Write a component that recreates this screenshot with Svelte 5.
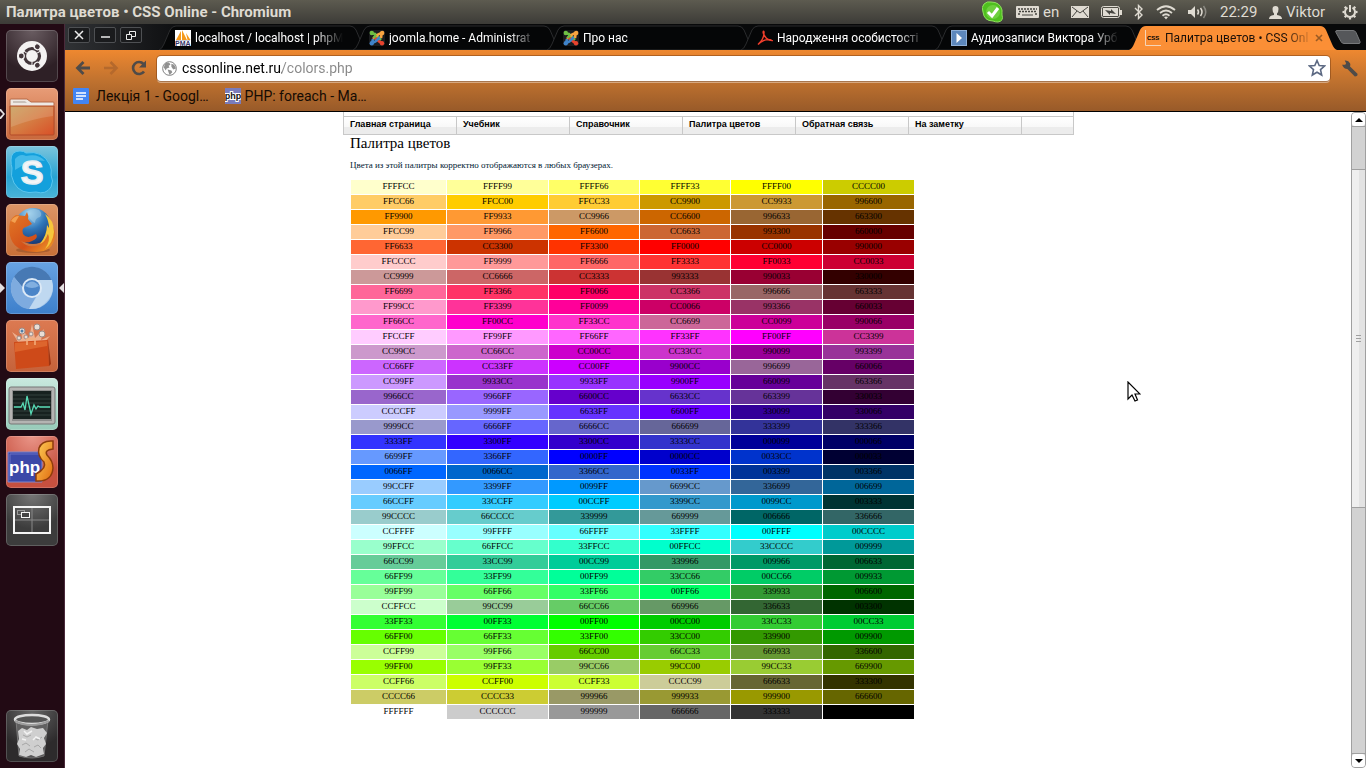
<script>
  const tabs = [
    { icon: 'pma', title: 'localhost / localhost | phpM' },
    { icon: 'joomla', title: 'joomla.home - Administrat' },
    { icon: 'joomla', title: 'Про нас' },
    { icon: 'pdf', title: 'Народження особистості' },
    { icon: 'play', title: 'Аудиозаписи Виктора Урб' },
    { icon: 'css', title: 'Палитра цветов • CSS Onl', active: true }
  ];

  const menu = ['Главная страница', 'Учебник', 'Справочник', 'Палитра цветов', 'Обратная связь', 'На заметку'];

  const rows = `
FFFFCC FFFF99 FFFF66 FFFF33 FFFF00 CCCC00
FFCC66 FFCC00 FFCC33 CC9900 CC9933 996600
FF9900 FF9933 CC9966 CC6600 996633 663300
FFCC99 FF9966 FF6600 CC6633 993300 660000
FF6633 CC3300 FF3300 FF0000 CC0000 990000
FFCCCC FF9999 FF6666 FF3333 FF0033 CC0033
CC9999 CC6666 CC3333 993333 990033 330000
FF6699 FF3366 FF0066 CC3366 996666 663333
FF99CC FF3399 FF0099 CC0066 993366 660033
FF66CC FF00CC FF33CC CC6699 CC0099 990066
FFCCFF FF99FF FF66FF FF33FF FF00FF CC3399
CC99CC CC66CC CC00CC CC33CC 990099 993399
CC66FF CC33FF CC00FF 9900CC 996699 660066
CC99FF 9933CC 9933FF 9900FF 660099 663366
9966CC 9966FF 6600CC 6633CC 663399 330033
CCCCFF 9999FF 6633FF 6600FF 330099 330066
9999CC 6666FF 6666CC 666699 333399 333366
3333FF 3300FF 3300CC 3333CC 000099 000066
6699FF 3366FF 0000FF 0000CC 0033CC 000033
0066FF 0066CC 3366CC 0033FF 003399 003366
99CCFF 3399FF 0099FF 6699CC 336699 006699
66CCFF 33CCFF 00CCFF 3399CC 0099CC 003333
99CCCC 66CCCC 339999 669999 006666 336666
CCFFFF 99FFFF 66FFFF 33FFFF 00FFFF 00CCCC
99FFCC 66FFCC 33FFCC 00FFCC 33CCCC 009999
66CC99 33CC99 00CC99 339966 009966 006633
66FF99 33FF99 00FF99 33CC66 00CC66 009933
99FF99 66FF66 33FF66 00FF66 339933 006600
CCFFCC 99CC99 66CC66 669966 336633 003300
33FF33 00FF33 00FF00 00CC00 33CC33 00CC33
66FF00 66FF33 33FF00 33CC00 339900 009900
CCFF99 99FF66 66CC00 66CC33 669933 336600
99FF00 99FF33 99CC66 99CC00 99CC33 669900
CCFF66 CCFF00 CCFF33 CCCC99 666633 333300
CCCC66 CCCC33 999966 999933 999900 666600
FFFFFF CCCCCC 999999 666666 333333 000000`
    .trim()
    .split('\n')
    .map((line) => line.split(' '));

  const hatches = [0, 120, 240];
  const teeth = [45, 90, 135, 180, 225, 270, 315];
</script>

{#snippet favicon(kind)}
  <svg class="favicon" viewBox="0 0 16 16" aria-hidden="true">
    {#if kind === 'pma'}
      <rect width="16" height="16" fill="#fff" />
      <path d="M1 10 6 1v9zM7 10V0l5 10zM12.500 10 11 3l4.500 7z" fill="#f59a1b" />
      <path d="M1 10.500h14" stroke="#c9c9d6" />
      <text x="0" y="16" font-family="Liberation Sans" font-weight="bold" font-size="7" fill="#333366">PMA</text>
    {:else if kind === 'joomla'}
      <rect width="16" height="16" rx="3" fill="#1b1c1e" />
      <g fill="none" stroke-width="2.600">
        <path d="M3 3.500 6 4l6 6" stroke="#6fbf44" />
        <path d="M12.500 3 9 4.500 4 9" stroke="#f9a541" />
        <path d="M13 13 10 11.500 5 7" stroke="#e8432e" />
        <path d="M3 13l1-4M3 13l3.500-1.500L11 7" stroke="#3f83c9" />
        <path d="m4.500 8 2.500-3" stroke="#6fbf44" />
        <path d="m12.500 4-.5 4" stroke="#f9a541" />
      </g>
      <circle cx="2.800" cy="3" r="2.200" fill="#6fbf44" />
      <circle cx="13.200" cy="3" r="2.200" fill="#f9a541" />
      <circle cx="13" cy="13.200" r="2.200" fill="#e8432e" />
      <circle cx="2.800" cy="13.200" r="2.200" fill="#3f83c9" />
    {:else if kind === 'pdf'}
      <path d="M1 14.500C4 12 7 7 7 2.500 7 .8 6 1 6.200 2.500 7 7 11 10.500 15 10.500 12 8.500 6 9.500 1 14.500z" fill="none" stroke="#ef3e2c" stroke-width="1.500" />
    {:else if kind === 'play'}
      <rect x=".5" y=".5" width="15" height="15" fill="#5d88bd" stroke="#8fb0d8" />
      <path d="M5.500 3v10l5.500-5z" fill="#fff" />
    {:else}
      <path d="M.5 0v15.500H16" fill="none" stroke="#f5d4b8" />
      <text x="2" y="10" font-family="Liberation Sans" font-weight="bold" font-size="6" fill="#000">CSS</text>
    {/if}
  </svg>
{/snippet}

<svelte:head><title>Палитра цветов • CSS Online</title></svelte:head>

<div class="desktop">
  <header class="panel">
    <span class="window-title">Палитра цветов • CSS Online - Chromium</span>
    <div class="tray">
      <svg width="22" height="22" viewBox="0 0 22 22">
        <path d="M2 3Q5 0 9 1q9 0 11 8 0 3 0 5 2 6-4 7-3 0-5-1-9 0-10-9Q-1 6 2 3z" fill="#4fc01f" stroke="#8fe05e" />
        <circle cx="11" cy="11" r="7" fill="#6ed03f" />
        <path d="m6 11 4 4 6-8" fill="none" stroke="#fff" stroke-width="3" />
      </svg>
      <span class="pair">
        <svg width="23" height="12" viewBox="0 0 23 12">
          <rect width="23" height="12" rx="1" fill="#dfdbd2" />
          <path d="M2 3h19M3 5.500h17M2 8h2M19 8h2" stroke="#45443f" stroke-width="1.500" stroke-dasharray="2 1" />
          <path d="M6 9h11" stroke="#45443f" />
        </svg>
        <span class="lang">en</span>
      </span>
      <svg width="18" height="12" viewBox="0 0 18 12">
        <rect width="18" height="12" fill="#dfdbd2" />
        <path d="m1 1 8 6 8-6M1 11l5-6M17 11l-5-6" fill="none" stroke="#45443f" />
      </svg>
      <svg width="21" height="12" viewBox="0 0 21 12">
        <rect x=".5" y=".5" width="18" height="11" rx="2" fill="none" stroke="#dfdbd2" />
        <rect x="2" y="2" width="15" height="8" fill="#dfdbd2" />
        <path d="M19 4h2v5h-2" fill="#dfdbd2" />
        <path d="m4 4 6 1V3l5 5-6-1v2z" fill="#45443f" />
      </svg>
      <svg width="10" height="16" viewBox="0 0 10 16">
        <path d="m1 4 7 7-3.500 3.500v-13L8 5l-7 7" fill="none" stroke="#dfdbd2" stroke-width="1.400" />
      </svg>
      <svg width="20" height="15" viewBox="0 0 20 15" fill="none" stroke="#dfdbd2" stroke-width="1.800">
        <path d="M1 5q9-7.500 18 0M4 8q6-5 12 0M6.500 10.800q3.500-3 7 0" />
        <path d="m8 12 2 2.500 2-2.500q-2-1-4 0z" fill="#dfdbd2" stroke="none" />
      </svg>
      <svg width="20" height="14" viewBox="0 0 20 14">
        <path d="M0 5h3l4-4v12L3 9H0z" fill="#dfdbd2" />
        <path d="M9.500 4.500q2 2.500 0 5M12.500 3q3 4 0 8" fill="none" stroke="#dfdbd2" stroke-width="1.500" />
        <path d="M15.500 1q4.500 6 0 12" fill="none" stroke="#8b8982" stroke-width="1.500" />
      </svg>
      <span class="clock">22:29</span>
      <span class="pair user">
        <svg width="13" height="13" viewBox="0 0 13 13">
          <path d="M3.500 3a3 3 0 0 1 6 0q0 3-1.500 4.500v1.500q5 .5 5 4H0q0-3.500 5-4V7.500Q3.500 6 3.500 3z" fill="#dfdbd2" />
        </svg>
        <span class="name">Viktor</span>
      </span>
      <svg width="16" height="16" viewBox="0 0 16 16" fill="none" stroke="#dfdbd2">
        <path d="M5.500 3.700a5 5 0 1 0 5 0" stroke-width="2" />
        <path d="M8 1v7" stroke-width="2" />
        {#each teeth as a}
          <path d="M8 2.500V.5" stroke-width="2.200" transform={`rotate(${a} 8 8)`} />
        {/each}
      </svg>
    </div>
  </header>

  <nav class="launcher" aria-label="Launcher">
    <button class="tile dash" aria-label="Dash">
      <svg viewBox="0 0 52 52">
        <circle cx="26" cy="26" r="15" fill="#f4f2f2" />
        <circle cx="26" cy="26" r="7.500" fill="none" stroke="#43363b" stroke-width="3.200" />
        {#each hatches as a}
          <g transform={`rotate(${a} 26 26)`}>
            <circle cx="15.300" cy="26" r="3" fill="#43363b" stroke="#f4f2f2" stroke-width="1.200" />
            <path d="m29 20.800 3-5" stroke="#f4f2f2" stroke-width="1" transform="rotate(30 26 26)" />
          </g>
        {/each}
      </svg>
    </button>

    <button class="tile files running" aria-label="Files">
      <svg viewBox="0 0 52 52">
        <defs>
          <linearGradient id="folder" x2="1" y2="1">
            <stop stop-color="#c69d58" /><stop offset=".5" stop-color="#d57b42" /><stop offset="1" stop-color="#d94f27" />
          </linearGradient>
        </defs>
        <path d="M4 46V12q0-1 1-1h16l4 3h22q1 0 1 1v31z" fill="#eee9e4" stroke="#b66a48" />
        <path d="M7 13h12l2 2H7z" fill="#c9c1ba" />
        <path d="M4 18h44v28q0 1-1 1H5q-1 0-1-1z" fill="url(#folder)" stroke="#b24b29" />
        <path d="M5 19h42v9Q25 31 5 39z" fill="#fff" opacity=".14" />
      </svg>
    </button>

    <button class="tile skype" aria-label="Skype">
      <svg viewBox="0 0 52 52">
        <path d="M5 14Q5 5 14 5q4 0 6 2 17-3 24 12 2 5 1 10 3 6 0 12-5 8-15 5-15 3-22-9-4-7-2-15-1-3-1-8z" fill="#13a0dc" stroke="#5cc6ee" />
        <path d="M9 13q5-6 11-3 12-3 19 5-12-3-30 9z" fill="#64cbf1" opacity=".6" />
        <text x="26" y="38" text-anchor="middle" font-family="Liberation Sans" font-size="34" font-weight="bold" fill="#f4f6f7" stroke="#e6eef2" stroke-width="1.500">S</text>
      </svg>
    </button>

    <button class="tile firefox" aria-label="Firefox">
      <svg viewBox="0 0 52 52">
        <defs>
          <radialGradient id="globe" cx=".4" cy=".15" r=".9">
            <stop stop-color="#9fd4f0" /><stop offset=".5" stop-color="#2f76b9" /><stop offset="1" stop-color="#15336f" />
          </radialGradient>
          <linearGradient id="fox" x2="1" y2="1">
            <stop stop-color="#e37a26" /><stop offset=".6" stop-color="#d2501a" /><stop offset="1" stop-color="#f4a42a" />
          </linearGradient>
        </defs>
        <ellipse cx="27" cy="46" rx="17" ry="3" fill="#8a4a24" opacity=".5" />
        <circle cx="27" cy="22" r="18" fill="url(#globe)" />
        <path d="M20 8q6-5 13-2 4 4 1 7-5 1-5 6-5-2-9-11z" fill="#a7cfe8" opacity=".5" />
        <path d="M4 18q2-5 6-7l9 1 2-4q2 4 1 7l4 5-6 3q-5 1-3 7 4 6 13 0 3 4-4 7-6 3-11 0 7 8 18 4 9-5 10-17l3 6-1-11q6 9 3 18-4 11-17 11Q10 48 5 35q-3-8-1-17z" fill="url(#fox)" />
        <path d="M39 10q9 6 9 18-1 11-9 17 6-9 3-15-3 8-8 10 7-9 7-19l2 3q0-7-4-14z" fill="#f6c63b" />
        <path d="M5 17q3-5 8-5l-4 7z" fill="#f3a050" />
      </svg>
    </button>

    <button class="tile chromium running focused" aria-label="Chromium">
      <svg viewBox="0 0 52 52">
        <circle cx="26" cy="26" r="21" fill="#a4c5e9" />
        <path d="M8 15a21 21 0 0 1 36 0l2 4H26q-6 0-8 8z" fill="#4779b4" />
        <path d="M8 15q-7 12 1 24 5 7 14 8l8-14q-10 3-13-6z" fill="#7eabdf" />
        <path d="M46 18q3 12-4 20-8 10-19 9l10-16q3-6-2-13z" fill="#bfd8f0" />
        <circle cx="26" cy="26" r="10" fill="#dce9f6" />
        <circle cx="26" cy="26" r="8" fill="#4b85c8" />
        <path d="M19 24q7-9 14 0-7 4-14 0z" fill="#81afe0" />
      </svg>
    </button>

    <button class="tile software" aria-label="Software Center">
      <svg viewBox="0 0 52 52">
        <path d="M12 22 6 12l10 7-1-11 8 10 3-14 3 14 9-9-3 11 9-4-7 8z" fill="#ffd9bd" opacity=".6" />
        <g fill="#e9ddd5" stroke="#9b8c88">
          <circle cx="16" cy="11" r="3" /><circle cx="31" cy="7" r="3" /><circle cx="25" cy="14" r="2" />
          <circle cx="36" cy="14" r="3" /><circle cx="20" cy="17" r="2" /><circle cx="13" cy="18" r="2" />
        </g>
        <circle cx="16" cy="11" r="1.500" fill="#4e7fa8" />
        <path d="m8 22 34-2 1 26-33 3z" fill="#ce4a19" />
        <path d="m9 23 32-2v5L9 32z" fill="#e16b32" opacity=".8" />
        <path d="m42 20 3 24-2 2z" fill="#9f3411" />
        <path d="M21 25v-6h8v6" fill="none" stroke="#f4b07e" stroke-width="1.500" />
      </svg>
    </button>

    <button class="tile monitor" aria-label="System Monitor">
      <svg viewBox="0 0 52 52">
        <rect x="3" y="9" width="46" height="37" rx="2" fill="#b4b4b2" stroke="#777" />
        <rect x="6" y="12" width="40" height="31" fill="#8d8e8d" />
        <rect x="7" y="13" width="38" height="28" fill="#17211f" />
        <path d="M7 17h38M7 21h38M7 25h38M7 29h38M7 33h38M7 37h38" stroke="#33413d" />
        <path d="M8 29h7l2-4 2 7 2-14 4 18 3-9 2 4 2-3 2 1h10" fill="none" stroke="#57d9b4" stroke-width="1.300" />
      </svg>
    </button>

    <button class="tile phpstorm" aria-label="PHP editor">
      <svg viewBox="0 0 52 52">
        <defs>
          <linearGradient id="storm" x2="1" y2="1"><stop stop-color="#ffd058" /><stop offset="1" stop-color="#e06b10" /></linearGradient>
        </defs>
        <path d="M2 16h34v30H2z" fill="#3b48a8" stroke="#8187cb" />
        <path d="M4 18h30M4 18v26" stroke="#6871c6" fill="none" />
        <text x="3" y="37" font-family="Liberation Sans Narrow, Liberation Sans" font-size="17" font-weight="bold" fill="#fff">php</text>
        <path d="M47 5q-11-1-14 7-2 8 5 14 3 6-8 12v7q16 1 17-13 0-7-6-13-3-5 6-6z" fill="url(#storm)" stroke="#8e3d0c" stroke-width="1.500" />
      </svg>
    </button>

    <button class="tile workspace" aria-label="Workspace Switcher">
      <svg viewBox="0 0 52 52" fill="none">
        <path d="M26 13v26M8 26h36" stroke="#888" />
        <rect x="8" y="13" width="36" height="26" stroke="#f5f5f5" stroke-width="2" />
        <rect x="11.500" y="16.500" width="7" height="4" stroke="#999" />
        <rect x="15.500" y="18.500" width="8" height="5" stroke="#f5f5f5" fill="#444" />
      </svg>
    </button>

    <button class="tile trash" aria-label="Trash">
      <svg viewBox="0 0 52 52">
        <path d="m10 10 3 36q13 4 25 0l4-36z" fill="#777" opacity=".55" stroke="#aaa" />
        <path d="m12 21 4-3 5 2 4-3 6 2 6-1 4 5-3 5 2 6-3 4 1 6-8 3-5-2-5 2-7-2 1-6-3-5 2-5z" fill="#cfcfcf" />
        <path d="m17 25 4 2 4-2M28 28l4 2 4-3M16 35l4-2 4 3M28 37l4-2 3 3M19 42l4-3 5 3" fill="none" stroke="#a6a6a6" />
        <path d="m18 21 3 3 5-3M27 30l3-3 4 2M16 29l4 1" fill="none" stroke="#f2f2f2" stroke-width="1.500" />
        <ellipse cx="26" cy="9.500" rx="17" ry="4.500" fill="#555" stroke="#dcdcdc" stroke-width="2.500" />
        <path d="M9 11q16 8 34 0" fill="none" stroke="#9c9c9c" stroke-width="2" />
      </svg>
    </button>
  </nav>

  <section class="browser">
    <div class="strip">
      <div class="controls">
        <button aria-label="Close"><svg viewBox="0 0 20 14"><path d="m6 3 8 8M14 3l-8 8" /></svg></button>
        <button aria-label="Minimize"><svg viewBox="0 0 20 14"><path d="M6 9h9" stroke-width="2" /></svg></button>
        <button aria-label="Restore"><svg viewBox="0 0 20 14"><path class="thin" d="M5.500 6.500h5v5h-5zM8.500 6V3.500h6v5H11" /></svg></button>
      </div>
      <div class="tabs" role="tablist">
        {#each tabs as tab}
          <div class="tab" class:active={tab.active}>
            <svg class="shape" viewBox="0 0 208 26" preserveAspectRatio="none" aria-hidden="true">
              <path d="M0 26Q3 25 5 20L11 6Q13 2 17 2H191Q195 2 197 6L203 20Q205 25 208 26z" />
            </svg>
            <button class="tab-label" role="tab" aria-selected={!!tab.active}>
              {@render favicon(tab.icon)}
              <span class="tab-title">{tab.title}</span>
            </button>
            {#if tab.active}
              <button class="tab-close" aria-label="Close tab">
                <svg viewBox="0 0 8 8"><path d="m1 1 6 6M7 1 1 7" stroke="#9a5a24" stroke-width="1.600" /></svg>
              </button>
            {/if}
          </div>
        {/each}
        <button class="new-tab" aria-label="New tab">
          <svg viewBox="0 0 26 14">
            <path d="M2 .5h16q2 0 3 2l4 9q.5 2-1 2H9q-2 0-3-2l-5-9q-1-2 1-2z" fill="#55575a" stroke="#77797b" />
          </svg>
        </button>
      </div>
    </div>

    <div class="toolbar">
      <div class="address-row">
        <button class="nav-btn" aria-label="Back">
          <svg viewBox="0 0 16 16"><path d="M15 8H3M8.500 2 2.500 8l6 6" fill="none" stroke="#4f4b48" stroke-width="2.800" /></svg>
        </button>
        <button class="nav-btn" aria-label="Forward">
          <svg viewBox="0 0 16 16"><path d="M1 8h12M7.500 2l6 6-6 6" fill="none" stroke="#b5692c" stroke-width="2.600" /></svg>
        </button>
        <button class="nav-btn" aria-label="Reload">
          <svg viewBox="0 0 16 16">
            <path d="M13 11.500A6 6 0 1 1 12.500 4" fill="none" stroke="#4f4b48" stroke-width="2.600" />
            <path d="M15 .5v7H8z" fill="#4f4b48" />
          </svg>
        </button>
        <div class="omnibox">
          <svg class="world" viewBox="0 0 16 16" aria-hidden="true">
            <circle cx="8" cy="8" r="7.300" fill="#fff" stroke="#777" />
            <path d="M3 3q3-2 5-1l1 2-2 1 1 2-3 1-1 2-2-3zM6 9l4 1 1 2-3 3-1-3zM10 3l3 1 2 4-3 1-2-3z" fill="#909090" />
          </svg>
          <input class="url" aria-label="Address" value="cssonline.net.ru/colors.php" />
          <svg class="star" viewBox="0 0 18 18" aria-hidden="true">
            <path d="m9 1.500 2.200 5 5.300.5-4 3.600 1.200 5.400L9 13.200 4.300 16l1.200-5.400-4-3.600 5.300-.5z" fill="#fff" stroke="#5b6882" stroke-width="1.600" />
          </svg>
        </div>
        <button class="wrench" aria-label="Settings">
          <svg viewBox="0 0 16 16">
            <path d="M1 4.500h3l.8-1.500L3.500.5Q7 0 8.500 3q.6 1.500 0 3l7 7q.5 2.500-2.500 2.500L6 8.500Q2.500 8.500 1 4.500z" fill="#4f4b48" />
          </svg>
        </button>
      </div>
      <div class="bookmarks">
        <a class="bookmark" href="#lecture">
          <svg viewBox="0 0 16 16" aria-hidden="true">
            <rect width="16" height="16" rx="1" fill="#4285f4" />
            <path d="M3 5h10M3 8h10M3 11h7" stroke="#fff" stroke-width="1.300" />
          </svg>
          <span>Лекція 1 - Googl…</span>
        </a>
        <a class="bookmark" href="#foreach">
          <svg viewBox="0 0 16 16" aria-hidden="true">
            <rect width="16" height="16" fill="#7a7cba" />
            <text x="8" y="11" text-anchor="middle" font-family="Liberation Sans" font-size="9" font-weight="bold" fill="#111" stroke="#fff" stroke-width="2" paint-order="stroke">php</text>
          </svg>
          <span>PHP: foreach - Ma…</span>
        </a>
      </div>
    </div>

    <div class="viewport">
      <main class="page">
        <div class="site">
          <nav class="menu" aria-label="Меню">
            {#each menu as item}
              <a href="#menu">{item}</a>
            {/each}
            <span class="rest"></span>
          </nav>
          <div class="content">
            <h1>Палитра цветов</h1>
            <p>Цвета из этой палитры корректно отображаются в любых браузерах.</p>
            <table>
              <colgroup>
                <col class="first" /><col class="second" /><col class="mid" /><col class="mid" /><col class="end" /><col class="end" />
              </colgroup>
              <tbody>
                {#each rows as row}
                  <tr>
                    {#each row as hex}
                      <td style={`background:#${hex}`}>{hex}</td>
                    {/each}
                  </tr>
                {/each}
              </tbody>
            </table>
          </div>
        </div>
      </main>
      <div class="scrollbar" aria-hidden="true">
        <span class="arrow up"><svg viewBox="0 0 8 4"><path d="M4 0 8 4H0z" /></svg></span>
        <span class="track before"></span>
        <span class="thumb"><i></i><i></i><i></i></span>
        <span class="track after"></span>
        <span class="arrow down"><svg viewBox="0 0 8 4"><path d="M0 0h8L4 4z" /></svg></span>
      </div>
    </div>
  </section>

  <svg class="pointer" viewBox="0 0 14 21" aria-hidden="true">
    <path d="M1 1v17l4-4 3 6 2.500-1-2.500-6h5z" fill="#fff" stroke="#000" stroke-width="1.200" />
  </svg>
</div>

<style>
  :global(body) {
    margin: 0;
    background: #fff;
  }

  .desktop {
    position: relative;
    display: grid;
    grid-template: 24px 1fr / 65px minmax(0, 1fr);
    min-height: 100vh;
    overflow: hidden;
    font-family: Roboto, "Open Sans", sans-serif;
  }

  svg {
    display: block;
    flex: none;
  }

  button {
    margin: 0;
    padding: 0;
    border: 0;
    background: none;
    font: inherit;
    color: inherit;
  }

  a {
    color: inherit;
    text-decoration: none;
  }

  .panel {
    grid-column: 1 / -1;
    display: flex;
    align-items: center;
    justify-content: space-between;
    padding: 0 8px 0 6px;
    background: linear-gradient(#5d5b50, #3c3b37);
    color: #dfdbd2;
    font-size: 15px;
    line-height: 24px;
    white-space: nowrap;
  }

  .window-title {
    font-weight: 700;
  }

  .tray,
  .pair {
    display: flex;
    align-items: center;
  }

  .tray {
    gap: 12px;
  }

  .pair {
    gap: 4px;
  }

  .lang {
    width: 16px;
  }

  .clock {
    width: 37px;
  }

  .name {
    width: 44px;
  }

  .launcher {
    display: flex;
    flex-direction: column;
    gap: 6px;
    box-sizing: border-box;
    padding: 6px;
    border-right: 1px solid #4b2a3b;
    background: #220a14;
  }

  .tile {
    position: relative;
    width: 52px;
    height: 52px;
    border-radius: 5px;
    box-shadow: inset 0 0 0 1px rgba(255, 255, 255, 0.18);
  }

  .trash {
    margin-top: auto;
  }

  .dash { background: radial-gradient(circle at 50% 0, #6a5d62, #2e2026 70%); }
  .files { background: linear-gradient(#e79c77, #c9683c); }
  .skype { background: linear-gradient(#7cc5dd, #27a3d2 60%, #4bb4d8); }
  .firefox { background: linear-gradient(#dd9466, #c87038); }
  .chromium { background: linear-gradient(#68a2e2, #3d7fcb); }
  .software { background: linear-gradient(#dc7a52, #c5623a); }
  .monitor { background: linear-gradient(#c9e9de, #97cbb9); }
  .phpstorm { background: radial-gradient(circle at 50% 0, #ea9689, #c6503f 70%); }
  .workspace { background: radial-gradient(circle at 50% 0, #777, #3c3c3c 60%); }
  .trash { background: radial-gradient(circle at 50% 0, #666, #2d2b2c 65%); }

  .running::before,
  .focused::after {
    content: "";
    position: absolute;
    top: 21px;
    width: 5px;
    height: 10px;
    background: #e4dfe1;
  }

  .running::before {
    left: -6px;
    clip-path: polygon(0 0, 100% 50%, 0 100%);
  }

  .files.running::before {
    clip-path: polygon(0 0, 20% 0, 100% 50%, 20% 100%, 0 100%, 0 80%, 60% 50%, 0 20%);
  }

  .focused::after {
    right: -6px;
    clip-path: polygon(100% 0, 0 50%, 100% 100%);
  }

  .browser {
    display: flex;
    flex-direction: column;
    min-width: 0;
  }

  .strip {
    display: flex;
    height: 26px;
    background: linear-gradient(90deg, #303235, #141517 90px, #08090a 140px);
  }

  .controls {
    display: flex;
    gap: 4px;
    width: 94px;
    padding-top: 3px;
    padding-left: 3px;
    box-sizing: border-box;
    flex: none;
  }

  .controls button {
    width: 22px;
    height: 16px;
    box-sizing: border-box;
    border: 1px solid #4e5053;
    border-radius: 2px;
    background: #1a1b1d;
  }

  .controls path {
    fill: none;
    stroke: #ececec;
    stroke-width: 1.5;
  }

  .controls .thin {
    stroke-width: 1;
  }

  .tabs {
    display: flex;
    flex: 1;
    min-width: 0;
  }

  .tab {
    position: relative;
    display: flex;
    align-items: center;
    flex: 0 1 208px;
    min-width: 0;
    box-sizing: border-box;
    margin-right: -14px;
    padding: 2px 14px 0 16px;
    color: #fff;
  }

  .shape {
    position: absolute;
    inset: 0;
    width: 100%;
    height: 100%;
    fill: #050607;
    stroke: #2a2b2d;
    stroke-width: 1;
  }

  .active {
    color: #1b1009;
    z-index: 1;
  }

  .active .shape {
    fill: #fb8f36;
    stroke: none;
  }

  .tab-label {
    position: relative;
    display: flex;
    align-items: center;
    gap: 4px;
    flex: 1;
    min-width: 0;
    text-align: left;
  }

  .favicon {
    width: 16px;
    height: 16px;
  }

  .tab-title {
    width: 150px;
    white-space: nowrap;
    font-size: 12px;
    line-height: 20px;
    -webkit-mask-image: linear-gradient(90deg, #000 120px, transparent 148px);
    mask-image: linear-gradient(90deg, #000 120px, transparent 148px);
  }

  .tab-close {
    position: relative;
    width: 8px;
    height: 8px;
  }

  .new-tab {
    align-self: center;
    width: 26px;
    margin-left: 12px;
    flex: none;
  }

  .toolbar {
    height: 61px;
    border-bottom: 1px solid #000;
    background: linear-gradient(#ee8830, #c0722f 50%, #985a29);
  }

  .address-row {
    display: flex;
    align-items: center;
    padding: 5px 8px 0 10px;
    height: 26px;
  }

  .nav-btn {
    width: 16px;
    margin-right: 12px;
  }

  .omnibox {
    display: flex;
    align-items: center;
    flex: 1;
    min-width: 0;
    height: 25px;
    margin-right: 11px;
    margin-left: -2px;
    padding: 0 4px 0 5px;
    border-radius: 4px;
    background: #fff;
    box-shadow: 0 0 0 1px rgba(110, 55, 15, 0.45), 0 2px 0 rgba(255, 255, 255, 0.4);
  }

  .world {
    width: 15px;
  }

  .url {
    flex: 1;
    min-width: 0;
    height: 24px;
    margin: 0;
    padding: 0 0 0 5px;
    border: 0;
    outline: 0;
    font: 14px/24px Roboto, "Open Sans", sans-serif;
    color: transparent;
    background: linear-gradient(90deg, #000 105px, #888 105px);
    -webkit-background-clip: text;
    background-clip: text;
  }

  .star {
    width: 18px;
  }

  .wrench {
    width: 17px;
  }

  .bookmarks {
    display: flex;
    gap: 16px;
    padding: 3px 8px 0;
    font-size: 14px;
    line-height: 24px;
    color: #150b03;
  }

  .bookmark {
    display: flex;
    align-items: center;
    gap: 7px;
    white-space: nowrap;
  }

  .bookmark + .bookmark {
    gap: 4px;
  }

  .bookmark svg {
    width: 16px;
  }

  .viewport {
    display: flex;
    flex: 1;
  }

  .page {
    flex: 1;
    min-width: 0;
    padding-left: 1px;
    background: #fff;
  }

  .site {
    max-width: 731px;
    margin: 0 auto;
  }

  .menu {
    display: flex;
    box-sizing: border-box;
    padding-top: 4px;
    border: solid #c8c8c8;
    border-width: 0 1px 1px;
    font: bold 9px/15px "Liberation Sans", sans-serif;
    color: #000;
  }

  .menu a,
  .rest {
    box-sizing: border-box;
    height: 18px;
    border-top: 1px solid #c8c8c8;
    background: linear-gradient(#fff, #f8f8f8 60%, #ececec 60%, #ececec);
  }

  .menu a {
    width: 113px;
    padding-left: 6px;
    border-right: 1px solid #c8c8c8;
  }

  .rest {
    flex: 1;
  }

  .content {
    padding: 0 7px;
    font-family: "Liberation Serif", serif;
    color: #000;
  }

  h1 {
    margin: 0;
    font-size: 15px;
    font-weight: 400;
    line-height: 17px;
  }

  p {
    margin: 8px 0;
    font-size: 9px;
    line-height: 11px;
    color: #001a33;
  }

  table {
    width: 565px;
    table-layout: fixed;
    border-collapse: separate;
    border-spacing: 1px;
  }

  .first { width: 95px; }
  .second { width: 101px; }
  .mid { width: 90px; }
  .end { width: 91px; }

  td {
    height: 14px;
    padding: 0;
    font-size: 9px;
    line-height: 12px;
    text-align: center;
    vertical-align: top;
  }

  .scrollbar {
    display: flex;
    flex-direction: column;
    box-sizing: border-box;
    width: 15px;
    border: 1px solid #a0a0a0;
    border-radius: 4px;
    background: #d2d2d2;
  }

  .arrow {
    display: flex;
    align-items: center;
    justify-content: center;
    height: 13px;
    background: #fff;
    border-radius: 3px;
  }

  .arrow svg {
    width: 8px;
  }

  .track.before {
    flex: 42;
    border-top: 1px solid #a0a0a0;
  }

  .track.after {
    flex: 246;
    border-bottom: 1px solid #a0a0a0;
  }

  .thumb {
    display: flex;
    flex: 338;
    flex-direction: column;
    align-items: center;
    justify-content: center;
    gap: 2px;
    border: solid #a0a0a0;
    border-width: 1px 0;
    background: linear-gradient(90deg, #efefef 55%, #e3e3e3 55%);
  }

  .thumb i {
    width: 5px;
    height: 1px;
    background: #a0a0a0;
  }

  .pointer {
    position: absolute;
    top: 381px;
    left: 1127px;
    width: 14px;
    height: 21px;
  }
</style>
